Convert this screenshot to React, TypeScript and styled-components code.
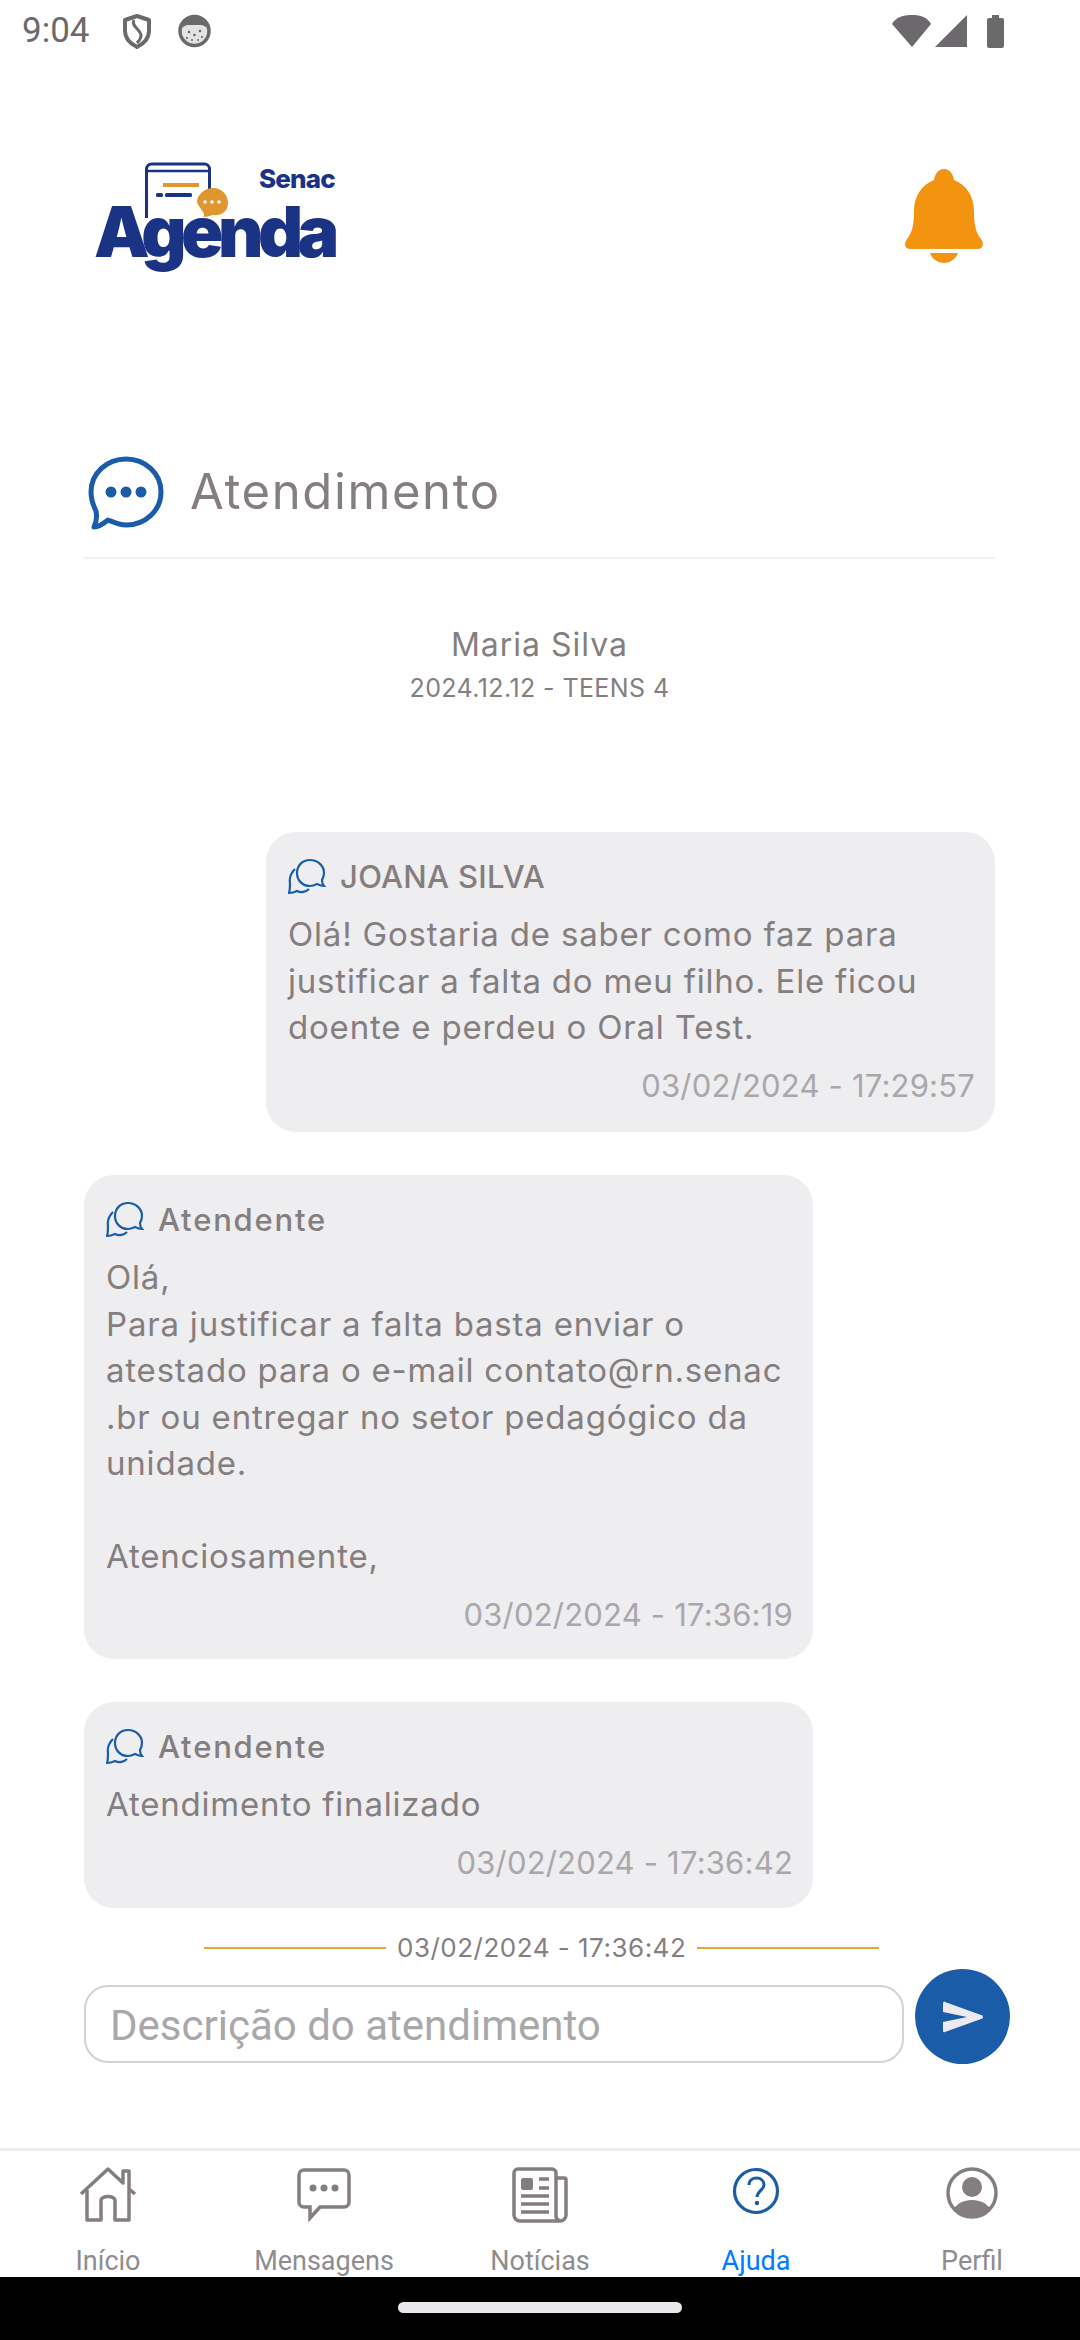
import styled, { createGlobalStyle } from "styled-components";

const GlobalStyle = createGlobalStyle`
  html, body {
    margin: 0;
    padding: 0;
    background: #fff;
  }
  * {
    box-sizing: border-box;
  }
`;

const BLUE = "#1a5ca8";
const NAVY = "#1b3385";
const ORANGE = "#e0962f";
const GRAY = "#857e7f";

function ShieldIcon() {
  return (
    <svg width="30" height="35" viewBox="0 0 30 35" fill="none">
      <path d="M15 2 L27 6 V17 C27 25 21 30 15 33 C9 30 3 25 3 17 V6 Z" stroke="#6b696b" strokeWidth="4" strokeLinejoin="round" />
      <path d="M12 6 C8 12 20 16 19 22 C18.500 26 16 28 15 29" stroke="#6b696b" strokeWidth="3" />
    </svg>
  );
}

function CatIcon() {
  return (
    <svg width="33" height="34" viewBox="0 0 33 34">
      <circle cx="16.500" cy="17" r="14.500" fill="#e4e3e4" stroke="#6b696b" strokeWidth="3.500" />
      <path d="M4 14 L6 5 L13 3 H20 L27 5 L29 14 C25 10 22 11 16.500 11 C11 11 8 10 4 14 Z" fill="#6b696b" />
      <circle cx="11" cy="18" r="1.300" fill="#6b696b" />
      <circle cx="22" cy="17" r="1.300" fill="#6b696b" />
      <circle cx="16.500" cy="21" r="1.300" fill="#6b696b" />
      <circle cx="9" cy="24" r="1.100" fill="#6b696b" />
      <circle cx="24" cy="23" r="1.100" fill="#6b696b" />
      <circle cx="14" cy="26" r="1" fill="#6b696b" />
      <circle cx="20" cy="26" r="1" fill="#6b696b" />
    </svg>
  );
}

function SystemIcons() {
  return (
    <svg width="116" height="36" viewBox="0 0 116 36">
      <path d="M0 10 C4 3 11 1 20 1 C29 1 35 3 39 10 L20 33 Z" fill="#6b696b" />
      <path d="M43 33 L75 1 V33 Z" fill="#6b696b" />
      <path d="M95 6 a2 2 0 0 1 2 -2 h3 v-3 h7 v3 h3 a2 2 0 0 1 2 2 v26 a2 2 0 0 1 -2 2 h-13 a2 2 0 0 1 -2 -2 Z" fill="#6b696b" />
    </svg>
  );
}

function LogoMark() {
  return (
    <svg width="84" height="56" viewBox="0 0 84 56" fill="none">
      <path d="M1.500 56 V7 a5 5 0 0 1 5 -5 h53 a5 5 0 0 1 5 5 V28" stroke={NAVY} strokeWidth="3" />
      <path d="M1.500 9 H64" stroke={NAVY} strokeWidth="2.500" />
      <rect x="18" y="21" width="36" height="4" fill={ORANGE} />
      <rect x="11" y="31" width="7" height="4" rx="1.500" fill={NAVY} />
      <rect x="20" y="31" width="27" height="4" rx="1.500" fill={NAVY} />
      <path d="M68 26 C77 26 83 33 83 41 C83 49 77 54 68 53 C64 54 61 55 58 55 C60 53 59 51 56 47 C53 43 52 41 52 39 C53 32 60 26 68 26 Z" fill={ORANGE} />
      <circle cx="60" cy="40" r="1.800" fill="#fff" />
      <circle cx="67" cy="40" r="1.800" fill="#fff" />
      <circle cx="74" cy="40" r="1.800" fill="#fff" />
    </svg>
  );
}

function BellIcon() {
  return (
    <svg width="80" height="94" viewBox="0 0 80 94">
      <path
        d="M40 0 C46 0 49 5 50 11 C63 16 70 28 70 42 C70 56 72 64 77 70 C80 74 80 80 73 80 H7 C0 80 0 74 3 70 C8 64 10 56 10 42 C10 28 17 16 30 11 C31 5 34 0 40 0 Z"
        fill="#f39410"
      />
      <path d="M26 84 H54 C52 90 46 94 40 94 C34 94 28 90 26 84 Z" fill="#f39410" />
    </svg>
  );
}

function ChatTitleIcon() {
  return (
    <svg width="76" height="74" viewBox="0 0 76 74" fill="none">
      <path
        d="M38 3 C57 3 73 17 73 36 C73 55 57 69 38 69 C31 69 25 66 20 64 C15 68 10 71 6 71 C9 65 9 60 8 55 C5 49 3 43 3 36 C3 17 19 3 38 3 Z"
        stroke={BLUE}
        strokeWidth="5"
        strokeLinejoin="round"
      />
      <circle cx="23" cy="36" r="5.500" fill={BLUE} />
      <circle cx="38" cy="36" r="5.500" fill={BLUE} />
      <circle cx="53" cy="36" r="5.500" fill={BLUE} />
    </svg>
  );
}

function BubbleIcon() {
  return (
    <svg width="38" height="37" viewBox="0 0 38 37" fill="none">
      <path
        d="M22 2 C30 2 36 8 36 15 C36 18 35 20 34 22 C34 25 35 27 36 28 C33 28 31 27 29 26 C27 27 25 28 22 28 C14 28 9 22 9 15 C9 8 14 2 22 2 Z"
        stroke={BLUE}
        strokeWidth="2.200"
      />
      <path
        d="M7 11 C3 15 1 19 2 25 C2 29 2 32 1 35 C4 35 7 34 9 33 C13 35 18 34 21 31"
        stroke={BLUE}
        strokeWidth="2.200"
      />
    </svg>
  );
}

function HomeIcon() {
  return (
    <svg width="58" height="56" viewBox="0 0 58 56" fill="none" stroke={GRAY} strokeWidth="3.500" strokeLinejoin="round">
      <path d="M2 27 L29 2 L44 16 V4 H50 V22 L56 27" />
      <path d="M8 23 V53 H22 V34 C22 28 36 28 36 34 V53 H50 V23" />
    </svg>
  );
}

function MessageIcon() {
  return (
    <svg width="56" height="56" viewBox="0 0 56 56">
      <path
        d="M8 3 H48 a5 5 0 0 1 5 5 V35 a5 5 0 0 1 -5 5 H24 L14 51 V40 H8 a5 5 0 0 1 -5 -5 V8 a5 5 0 0 1 5 -5 Z"
        fill="none"
        stroke={GRAY}
        strokeWidth="3.500"
      />
      <circle cx="17" cy="21" r="3.500" fill={GRAY} />
      <circle cx="28" cy="21" r="3.500" fill={GRAY} />
      <circle cx="39" cy="21" r="3.500" fill={GRAY} />
    </svg>
  );
}

function NewsIcon() {
  return (
    <svg width="56" height="56" viewBox="0 0 56 56" fill="none">
      <path d="M44 11 H52 a2 2 0 0 1 2 2 V48 a6 6 0 0 1 -6 6 H8 a6 6 0 0 1 -6 -6 V6 a4 4 0 0 1 4 -4 H40 a4 4 0 0 1 4 4 V48 a6 6 0 0 0 4 6" stroke={GRAY} strokeWidth="3.500" />
      <rect x="9" y="11" width="12" height="12" rx="2" fill={GRAY} />
      <path d="M27 12 H37 M27 21 H37 M9 29 H37 M9 37 H37 M9 45 H37" stroke={GRAY} strokeWidth="3.500" />
    </svg>
  );
}

function HelpIcon() {
  return (
    <svg width="48" height="48" viewBox="0 0 48 48" fill="none">
      <circle cx="24" cy="24" r="21.500" stroke={BLUE} strokeWidth="3.200" />
      <path d="M17 18 C17 13 21 11 24.500 11 C29 11 32 14 32 18 C32 23 25 24 25 30" stroke={BLUE} strokeWidth="3" />
      <circle cx="25" cy="36" r="2.200" fill={BLUE} />
    </svg>
  );
}

function ProfileIcon() {
  return (
    <svg width="52" height="52" viewBox="0 0 52 52">
      <defs>
        <clipPath id="perfil-clip">
          <circle cx="26" cy="26" r="24" />
        </clipPath>
      </defs>
      <circle cx="26" cy="20" r="10" fill={GRAY} />
      <path d="M4 52 C6 38 16 33 26 33 C36 33 46 38 48 52 Z" fill={GRAY} clipPath="url(#perfil-clip)" />
      <circle cx="26" cy="26" r="24" fill="none" stroke={GRAY} strokeWidth="3.500" />
    </svg>
  );
}

function SendIcon() {
  return (
    <svg width="40" height="34" viewBox="0 0 40 34">
      <path d="M2 2 L38 15 a2 2 0 0 1 0 4 L2 32 C0 33 0 31 0 30 V22 L24 17 L0 12 V4 C0 2 1 1 2 2 Z" fill="#eceaf0" />
    </svg>
  );
}

const Page = styled.div`
  width: 1080px;
  height: 2340px;
  display: flex;
  flex-direction: column;
  overflow: hidden;
  background: #fff;
  font-family: Inter, "Noto Sans", sans-serif;
  color: ${GRAY};
`;

const StatusBar = styled.div`
  height: 60px;
  padding: 14px 72px 0 22px;
  display: flex;
  align-items: flex-start;
  gap: 26px;
`;

const Clock = styled.span`
  font: 400 35px/34px Roboto, sans-serif;
  color: #6b696b;
  width: 74px;
`;

const StatusRight = styled.div`
  margin-left: auto;
`;

const Header = styled.header`
  height: 396px;
  padding: 102px 96px 0 94px;
  display: flex;
  justify-content: space-between;
  align-items: flex-start;
`;

const Logo = styled.div`
  position: relative;
  width: 242px;
  height: 110px;
`;

const LogoIconSlot = styled.div`
  position: absolute;
  left: 51px;
  top: 0;
`;

const LogoSenac = styled.span`
  position: absolute;
  right: 1px;
  top: 3px;
  font: 800 26px/27px Inter, sans-serif;
  letter-spacing: -0.800px;
  color: ${NAVY};
`;

const LogoAgenda = styled.span`
  position: absolute;
  left: 0;
  top: 37px;
  font: 900 70px/66px Inter, sans-serif;
  letter-spacing: -5.500px;
  color: ${NAVY};
`;

const BellSlot = styled.div`
  margin-top: 7px;
`;

const Content = styled.main`
  flex: 1;
  padding: 0 85px 0 84px;
  display: flex;
  flex-direction: column;
`;

const TitleRow = styled.div`
  height: 103px;
  padding-left: 4px;
  display: flex;
  align-items: flex-start;
  gap: 26px;
  border-bottom: 2px solid #f0eff1;
`;

const Title = styled.h1`
  margin: 0;
  font-size: 49px;
  line-height: 72px;
  font-weight: 400;
  letter-spacing: 1.600px;
`;

const Student = styled.div`
  height: 273px;
  padding-top: 64px;
  text-align: center;
`;

const StudentName = styled.div`
  font-size: 32px;
  line-height: 44px;
  letter-spacing: 1px;
`;

const StudentClass = styled.div`
  font-size: 25px;
  line-height: 42px;
  letter-spacing: 0.400px;
`;

const Messages = styled.div`
  display: flex;
  flex-direction: column;
  gap: 43px;
`;

const Bubble = styled.article<{ $mine?: boolean; $height: number }>`
  width: 729px;
  height: ${(p) => p.$height}px;
  align-self: ${(p) => (p.$mine ? "flex-end" : "flex-start")};
  padding: 24px 20px 0 22px;
  display: flex;
  flex-direction: column;
  background: #eeedf0;
  border-radius: 30px;
`;

const BubbleHead = styled.div`
  height: 40px;
  display: flex;
  align-items: center;
  gap: 14px;
`;

const Sender = styled.span<{ $tracking: number }>`
  font-size: 31px;
  font-weight: 500;
  letter-spacing: ${(p) => p.$tracking}px;
`;

const Body = styled.p`
  margin: 15px 0 0;
  font-size: 33px;
  line-height: 46.500px;
  letter-spacing: 0.800px;
  white-space: pre-line;
`;

const Stamp = styled.time`
  margin-top: 13px;
  align-self: flex-end;
  font-size: 31px;
  line-height: 44px;
  letter-spacing: 0.200px;
  color: #a9a7aa;
`;

const Separator = styled.div`
  margin-top: 22px;
  padding: 0 33px 0 120px;
  display: flex;
  align-items: center;
  gap: 11px;
  font-size: 26px;
  line-height: 36px;
  letter-spacing: 0.500px;
`;

const Rule = styled.span`
  width: 182px;
  height: 2px;
  background: #e0a830;
`;

const Composer = styled.div`
  margin-top: 3px;
  margin-right: -15px;
  display: flex;
  align-items: flex-start;
  gap: 11px;
`;

const Input = styled.input`
  width: 820px;
  height: 78px;
  margin-top: 16px;
  padding: 2px 24px 0;
  border: 2px solid #d2d1d3;
  border-radius: 24px;
  background: #fff;
  outline: none;
  font: 400 42px Roboto, sans-serif;
  &::placeholder {
    color: #a9a7aa;
    opacity: 1;
  }
`;

const SendButton = styled.button`
  width: 95px;
  height: 95px;
  padding: 0;
  display: flex;
  align-items: center;
  justify-content: center;
  border: 0;
  border-radius: 50%;
  background: ${BLUE};
`;

const TabBar = styled.nav`
  height: 129px;
  display: grid;
  grid-template-columns: repeat(5, 1fr);
  border-top: 3px solid #ebeaec;
  overflow: hidden;
`;

const Tab = styled.div<{ $active?: boolean }>`
  display: flex;
  flex-direction: column;
  align-items: center;
  font: 400 27px/34px Roboto, sans-serif;
  color: ${(p) => (p.$active ? "#007aff" : "#8e8c90")};
`;

const TabIcon = styled.div`
  height: 93px;
  padding-top: 16px;
  display: flex;
  align-items: flex-start;
`;

const GestureArea = styled.div`
  height: 63px;
  padding-top: 25px;
  display: flex;
  justify-content: center;
  background: #000;
`;

const GesturePill = styled.div`
  width: 284px;
  height: 11px;
  border-radius: 6px;
  background: #e9e7eb;
`;

const chat = [
  {
    mine: true,
    height: 300,
    sender: "JOANA SILVA",
    tracking: 0.3,
    text: "Olá! Gostaria de saber como faz para\njustificar a falta do meu filho. Ele ficou\ndoente e perdeu o Oral Test.",
    date: "03/02/2024 - 17:29:57",
  },
  {
    height: 484,
    sender: "Atendente",
    tracking: 1.8,
    text: "Olá,\nPara justificar a falta basta enviar o\natestado para o e-mail contato@rn.senac\n.br ou entregar no setor pedagógico da\nunidade.\n\nAtenciosamente,",
    date: "03/02/2024 - 17:36:19",
  },
  {
    height: 206,
    sender: "Atendente",
    tracking: 1.8,
    text: "Atendimento finalizado",
    date: "03/02/2024 - 17:36:42",
  },
];

const tabs = [
  { label: "Início", icon: <HomeIcon /> },
  { label: "Mensagens", icon: <MessageIcon /> },
  { label: "Notícias", icon: <NewsIcon /> },
  { label: "Ajuda", icon: <HelpIcon />, active: true },
  { label: "Perfil", icon: <ProfileIcon /> },
];

export default function App() {
  return (
    <Page>
      <GlobalStyle />
      <StatusBar>
        <Clock>9:04</Clock>
        <ShieldIcon />
        <CatIcon />
        <StatusRight>
          <SystemIcons />
        </StatusRight>
      </StatusBar>
      <Header>
        <Logo>
          <LogoIconSlot>
            <LogoMark />
          </LogoIconSlot>
          <LogoSenac>Senac</LogoSenac>
          <LogoAgenda>Agenda</LogoAgenda>
        </Logo>
        <BellSlot>
          <BellIcon />
        </BellSlot>
      </Header>
      <Content>
        <TitleRow>
          <ChatTitleIcon />
          <Title>Atendimento</Title>
        </TitleRow>
        <Student>
          <StudentName>Maria Silva</StudentName>
          <StudentClass>2024.12.12 - TEENS 4</StudentClass>
        </Student>
        <Messages>
          {chat.map((m) => (
            <Bubble key={m.date} $mine={m.mine} $height={m.height}>
              <BubbleHead>
                <BubbleIcon />
                <Sender $tracking={m.tracking}>{m.sender}</Sender>
              </BubbleHead>
              <Body>{m.text}</Body>
              <Stamp>{m.date}</Stamp>
            </Bubble>
          ))}
        </Messages>
        <Separator>
          <Rule />
          03/02/2024 - 17:36:42
          <Rule />
        </Separator>
        <Composer>
          <Input placeholder="Descrição do atendimento" />
          <SendButton>
            <SendIcon />
          </SendButton>
        </Composer>
      </Content>
      <TabBar>
        {tabs.map((t) => (
          <Tab key={t.label} $active={t.active}>
            <TabIcon>{t.icon}</TabIcon>
            {t.label}
          </Tab>
        ))}
      </TabBar>
      <GestureArea>
        <GesturePill />
      </GestureArea>
    </Page>
  );
}
